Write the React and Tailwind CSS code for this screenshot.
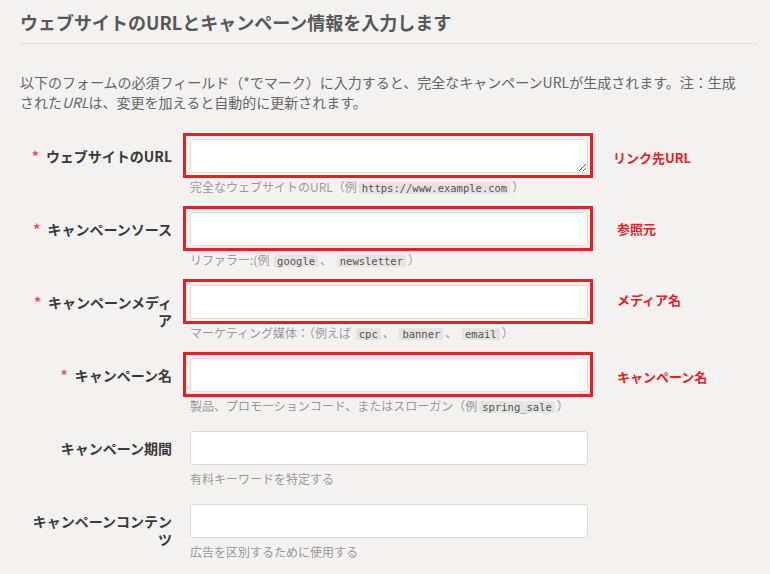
const jp = "font-['Noto_Sans_CJK_JP','Noto_Sans',sans-serif]"

function Code({ children }) {
  return (
    <code className="mx-[2px] rounded-[2px] bg-[#e6e4e1] px-[3px] font-['DejaVu_Sans_Mono',monospace] text-[10.5px] leading-none text-[#555]">
      {children}
    </code>
  )
}

const rows = [
  {
    label: 'ウェブサイトのURL',
    required: true,
    textarea: true,
    note: 'リンク先URL',
    notePad: 'pl-[7px] mt-[2px]',
    help: <>完全なウェブサイトのURL（例<Code>https://www.example.com</Code>）</>,
  },
  {
    label: 'キャンペーンソース',
    required: true,
    note: '参照元',
    notePad: 'pl-[11px]',
    help: <>リファラー:(例 <Code>google</Code>、 <Code>newsletter</Code>）</>,
  },
  {
    label: 'キャンペーンメディア',
    required: true,
    note: 'メディア名',
    notePad: 'pl-[11px] -mt-[2px]',
    help: <>マーケティング媒体：（例えば <Code>cpc</Code>、 <Code>banner</Code>、 <Code>email</Code>）</>,
  },
  {
    label: 'キャンペーン名',
    required: true,
    note: 'キャンペーン名',
    notePad: 'pl-[11px] mt-[2px]',
    help: <>製品、プロモーションコード、またはスローガン（例<Code>spring_sale</Code>）</>,
  },
  { label: 'キャンペーン期間', help: '有料キーワードを特定する' },
  { label: 'キャンペーンコンテンツ', help: '広告を区別するために使用する' },
]

export default function App() {
  return (
    <div className={`min-h-[574px] w-[770px] bg-[#f3f2f0] pl-[20px] pr-[13px] pt-[10px] ${jp}`}>
      <h2 className="text-[18px] font-bold leading-[24px] text-[#585858]">
        ウェブサイトのURLとキャンペーン情報を入力します
      </h2>
      <hr className="mt-[9px] border-0 border-t border-[#e3e1de]" />
      <p className="mt-[28px] text-[14px] leading-[20px] text-[#666]">
        以下のフォームの必須フィールド（*でマーク）に入力すると、完全なキャンペーンURLが生成されます。注：生成
        <br />
        された<i>URL</i>は、変更を加えると自動的に更新されます。
      </p>

      <div className="mt-[27px] flex flex-col gap-[16px]">
        {rows.map((r) => (
          <div key={r.label} className="grid grid-cols-[152px_398px_1fr] gap-x-[18px]">
            <label className="pl-[10px] pt-[8px] text-right text-[14px] font-bold leading-[18px] text-[#3a3a3a]">
              {r.required && <span className="mr-[7px] text-[#e5534b]">*</span>}
              {r.label}
            </label>
            <div>
              <div className="relative">
                {r.textarea ? (
                  <textarea className="block h-[34px] w-full resize-y rounded-[3px] border border-[#dddbd8] bg-white outline-none" />
                ) : (
                  <input className="block h-[34px] w-full rounded-[3px] border border-[#dddbd8] bg-white outline-none" />
                )}
                {r.note && (
                  <span className="pointer-events-none absolute -bottom-[5px] -left-[7px] -right-[5px] -top-[6px] border-[3px] border-[#ec1c24]" />
                )}
              </div>
              <p className="mt-[5px] h-[18px] whitespace-nowrap text-[12px] leading-[18px] text-[#9a9a9a]">{r.help}</p>
            </div>
            <div className={`pt-[8px] text-[13px] leading-[18px] ${r.notePad || ''}`}>
              {r.note && <span className="font-bold text-[#ec1c24]">{r.note}</span>}
            </div>
          </div>
        ))}
      </div>
    </div>
  )
}
